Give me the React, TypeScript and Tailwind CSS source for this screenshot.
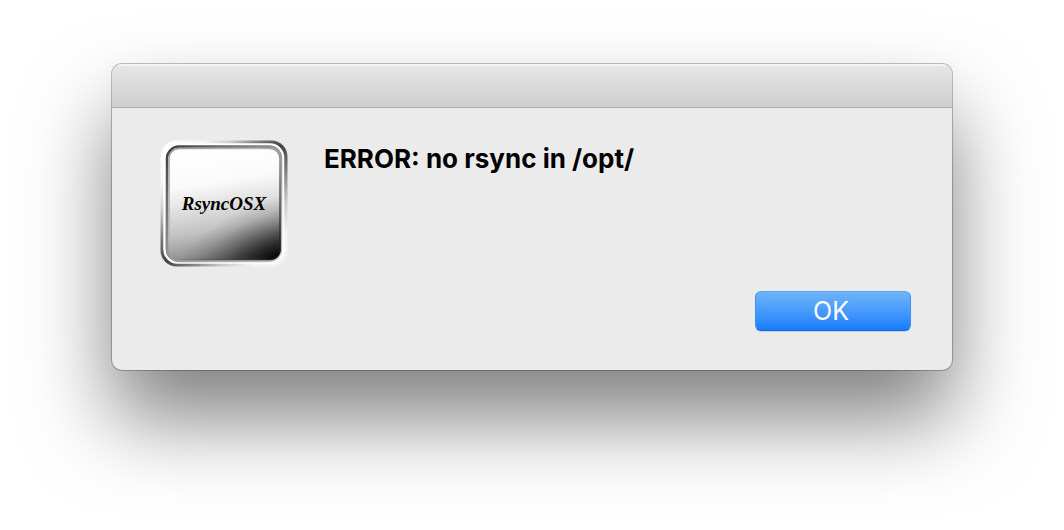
function AppIcon() {
  return (
    <svg viewBox="0 0 128 128" className="size-32 shrink-0" role="img" aria-label="RsyncOSX">
      <defs>
        <linearGradient id="rim" x1="0" y1="0" x2="1" y2="1">
          <stop offset="0" stopColor="#fff" />
          <stop offset="0.18" stopColor="#f4f4f4" />
          <stop offset="0.28" stopColor="#ccc" />
          <stop offset="0.4" stopColor="#777" />
          <stop offset="0.5" stopColor="#444" />
          <stop offset="0.6" stopColor="#777" />
          <stop offset="0.74" stopColor="#ccc" />
          <stop offset="0.86" stopColor="#f4f4f4" />
          <stop offset="1" stopColor="#f4f4f4" />
        </linearGradient>
        <linearGradient id="bevel" x1="0" y1="0" x2="1" y2="1">
          <stop offset="0" stopColor="#3a3a3a" />
          <stop offset="0.2" stopColor="#666" />
          <stop offset="0.5" stopColor="#999" />
          <stop offset="0.75" stopColor="#aaa" />
          <stop offset="1" stopColor="#c4c4c4" />
        </linearGradient>
        <linearGradient id="lip" x1="0" y1="0" x2="1" y2="1">
          <stop offset="0" stopColor="#999" />
          <stop offset="0.4" stopColor="#bbb" />
          <stop offset="0.65" stopColor="#666" />
          <stop offset="1" stopColor="#111" />
        </linearGradient>
        <linearGradient id="face" x1="0.42" y1="0" x2="0.58" y2="1">
          <stop offset="0" stopColor="#fff" />
          <stop offset="0.3" stopColor="#fafafa" />
          <stop offset="0.5" stopColor="#e0e0e0" />
          <stop offset="0.7" stopColor="#c4c4c4" />
          <stop offset="1" stopColor="#808080" />
        </linearGradient>
        <radialGradient
          id="shade"
          gradientUnits="userSpaceOnUse"
          cx="0"
          cy="0"
          r="1"
          gradientTransform="translate(122 124) rotate(-20) scale(120 66)"
        >
          <stop offset="0" stopColor="#000" />
          <stop offset="0.14" stopColor="#000" stopOpacity="0.94" />
          <stop offset="0.35" stopColor="#000" stopOpacity="0.66" />
          <stop offset="0.6" stopColor="#000" stopOpacity="0.32" />
          <stop offset="0.8" stopColor="#000" stopOpacity="0.11" />
          <stop offset="1" stopColor="#000" stopOpacity="0" />
        </radialGradient>
        <filter id="soft" x="-5%" y="-5%" width="110%" height="110%">
          <feGaussianBlur stdDeviation="0.5" />
        </filter>
      </defs>
      <rect x="0.5" y="0.5" width="127" height="126" rx="16" fill="url(#rim)" />
      <g fill="none" filter="url(#soft)">
        <rect x="4.5" y="4.5" width="118.500" height="118" rx="13" stroke="#fff" strokeWidth="2.5" />
        <rect x="7" y="6.5" width="114" height="114.500" rx="12" stroke="url(#bevel)" strokeWidth="2.500" />
      </g>
      <rect x="8.5" y="8" width="112" height="112" rx="10" fill="url(#face)" />
      <rect x="8.5" y="8" width="112" height="112" rx="10" fill="url(#shade)" />
      <rect
        x="9"
        y="8.5"
        width="111"
        height="111"
        rx="10"
        fill="none"
        stroke="url(#lip)"
        strokeWidth="1.5"
        filter="url(#soft)"
      />
      <text x="64" y="70" textAnchor="middle" fontSize="19" className="font-['Liberation_Serif',serif] font-bold italic">
        RsyncOSX
      </text>
    </svg>
  );
}

export default function App() {
  return (
    <main className="min-h-screen bg-white px-28 pt-16 font-['Inter',sans-serif] text-black">
      <section
        role="alertdialog"
        aria-labelledby="message"
        className="overflow-hidden rounded-[10px] bg-[#ebebeb] shadow-[0_0_0_1px_rgba(0,0,0,0.24),0_48px_84px_rgba(0,0,0,0.5)]"
      >
        <header className="h-11 border-t-2 border-b border-t-[#f3f3f3] border-b-[#adadad] bg-linear-to-b from-[#e6e6e6] to-[#cecece]" />
        <div className="flex flex-col gap-[23px] pt-8 pr-[41px] pb-[39px] pl-12">
          <div className="flex items-start gap-9">
            <AppIcon />
            <h1 id="message" className="text-[26px] leading-[38px] font-bold">
              ERROR: no rsync in /opt/
            </h1>
          </div>
          <div className="flex justify-end">
            <button
              type="button"
              className="h-10 w-[156px] rounded-md border border-t-[#5ba5ee] border-r-[#3f92f5] border-b-[#0f62fb] border-l-[#3f92f5] bg-linear-to-b from-[#6fb4f8] to-[#157efc] pr-1 text-[25px] leading-none text-white shadow-[0_1px_1px_rgba(0,0,0,0.12)]"
            >
              OK
            </button>
          </div>
        </div>
      </section>
    </main>
  );
}
